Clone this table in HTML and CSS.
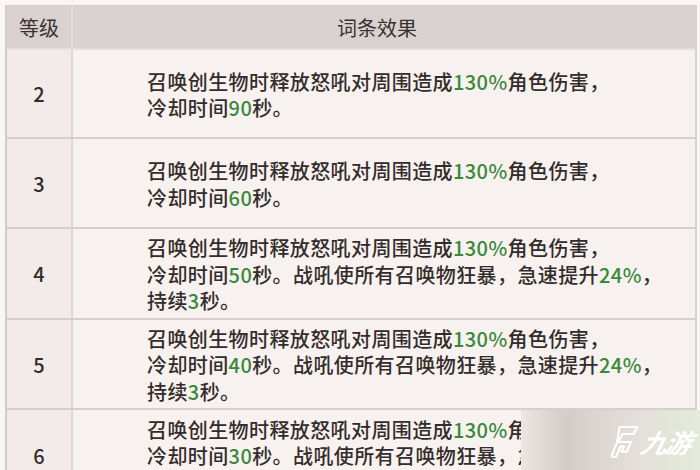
FILE: index.html
```html
<!DOCTYPE html>
<html lang="zh">
<head>
<meta charset="utf-8">
<link rel="stylesheet" href="styles.css">
</head>
<body>
<div class="page">
  <div class="table">
    <div class="row head">
      <div class="lvl">等级</div>
      <div class="eff">词条效果</div>
    </div>
    <div class="row r2">
      <div class="lvl">2</div>
      <div class="eff"><p>召唤创生物时释放怒吼对周围造成<em>130%</em>角色伤害，<br>冷却时间<em>90</em>秒。</p></div>
    </div>
    <div class="row r3">
      <div class="lvl">3</div>
      <div class="eff"><p>召唤创生物时释放怒吼对周围造成<em>130%</em>角色伤害，<br>冷却时间<em>60</em>秒。</p></div>
    </div>
    <div class="row r4">
      <div class="lvl">4</div>
      <div class="eff"><p>召唤创生物时释放怒吼对周围造成<em>130%</em>角色伤害，<br>冷却时间<em>50</em>秒。战吼使所有召唤物狂暴，急速提升<em>24%</em>，<br>持续<em>3</em>秒。</p></div>
    </div>
    <div class="row r5">
      <div class="lvl">5</div>
      <div class="eff"><p>召唤创生物时释放怒吼对周围造成<em>130%</em>角色伤害，<br>冷却时间<em>40</em>秒。战吼使所有召唤物狂暴，急速提升<em>24%</em>，<br>持续<em>3</em>秒。</p></div>
    </div>
    <div class="row r6">
      <div class="lvl">6</div>
      <div class="eff"><p>召唤创生物时释放怒吼对周围造成<em>130%</em>角色伤害，<br>冷却时间<em>30</em>秒。战吼使所有召唤物狂暴，急速提升<em>24%</em>，<br>持续<em>3</em>秒。</p></div>
    </div>
  </div>
  <div class="watermark">
    <svg class="wm-logo" width="30" height="40" viewBox="0 0 34 42">
      <path d="M12 4 H32 L28 12 H15 L11 21 H25 L20 32 H14 L17 26 H13 L8 38 H4 L3 36 L9 22 Z" fill="none" stroke="#ffffff" stroke-width="2.4" stroke-linejoin="round"/>
    </svg>
    <span class="wm-text">九游</span>
  </div>
</div>
</body>
</html>
```

FILE: styles.css
```css
html, body {
  margin: 0;
  padding: 0;
}
body {
  width: 700px;
  height: 470px;
  overflow: hidden;
  background: #faf6f5;
  font-family: "Noto Sans CJK SC", "Noto Sans", sans-serif;
  color: #332c2a;
}
.page {
  position: relative;
  width: 700px;
  height: 470px;
  padding: 5px 3px 0 5px;
  box-sizing: border-box;
}
.table {
  border-top: 1px solid #d6cfcd;
  border-left: 2px solid #d2cbc9;
  border-right: 2px solid #d8d1cf;
}
.row {
  display: grid;
  grid-template-columns: 66px 1fr;
  border-bottom: 2px solid #d5cecc;
}
.lvl {
  border-right: 2px solid #ddd6d4;
  display: flex;
  align-items: center;
  justify-content: center;
  font-size: 20px;
  font-weight: 500;
  background: #f2ebea;
}
.eff {
  display: flex;
  align-items: center;
  padding-left: 74px;
  background: #f7f1ef;
  font-size: 20px;
  font-weight: 500;
  letter-spacing: 0.4px;
}
.eff p {
  margin: 0;
  line-height: 26.5px;
  padding-top: 3px;
}
.eff em {
  font-style: normal;
  color: #3b883b;
}
.head {
  height: 42px;
  background: #d9d2d1;
  border-bottom: 2px solid #e4dedc;
}
.head .lvl,
.head .eff {
  background: #d9d2d1;
  color: #3a3230;
  font-weight: 400;
  letter-spacing: 0;
}
.head .lvl {
  border-right: 2px solid #e2dcda;
}
.head .eff {
  justify-content: center;
  padding-left: 0;
  padding-right: 14px;
}
.r2 { height: 87px; }
.r3 { height: 88px; }
.r4 { height: 89px; }
.r5 { height: 88px; }
.r6 { height: 90px; }
.watermark {
  position: absolute;
  left: 521px;
  top: 410px;
  width: 179px;
  height: 60px;
  background: linear-gradient(90deg, #ece5e1 0%, #d4ccc7 25%, #ddd6d1 45%, #e4dfda 65%, #e2e6d8 85%, #e6eadd 100%);
  display: flex;
  align-items: center;
  padding-left: 88px;
  padding-top: 4px;
  box-sizing: border-box;
  gap: 3px;
}
.wm-logo {
  flex-shrink: 0;
}
.wm-text {
  flex-shrink: 0;
  white-space: nowrap;
  color: #ffffff;
  font-size: 26px;
  font-weight: 700;
  font-style: italic;
  transform: skewX(-14deg);
  letter-spacing: -2px;
  line-height: 1;
}
```
